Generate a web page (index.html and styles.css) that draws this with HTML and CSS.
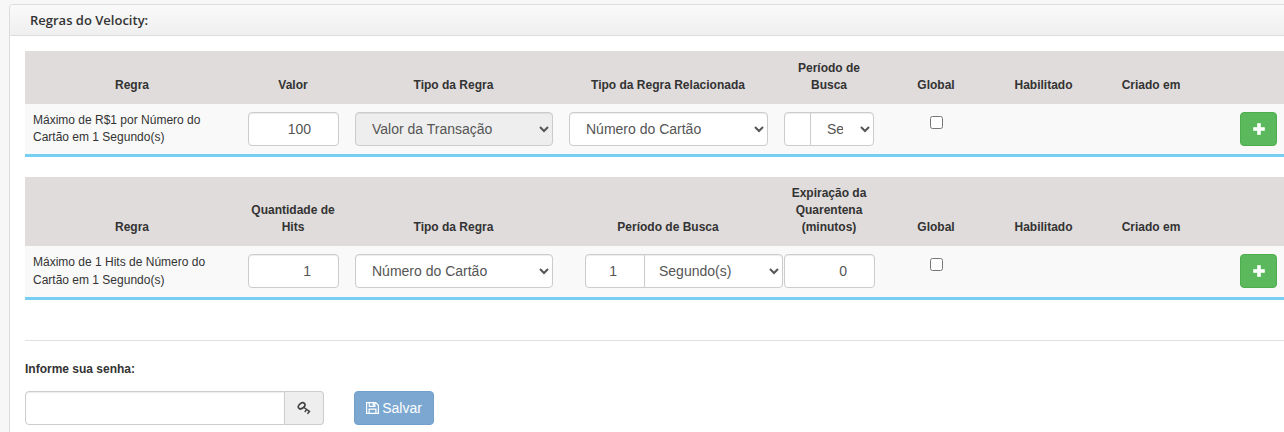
FILE: index.html
```html
<!DOCTYPE html>
<html lang="pt-BR">
<head>
<meta charset="utf-8">
<title>Regras do Velocity</title>
<link rel="stylesheet" href="styles.css">
</head>
<body>
<section class="panel">
  <header class="panel-heading">Regras do Velocity:</header>
  <div class="panel-body">
    <table class="rules rules-value">
      <colgroup><col class="c-rule"><col class="c1"><col class="c-type"><col class="c-rule"><col class="c1"><col class="c1"><col class="c-enabled"><col class="c1"><col class="c1"></colgroup>
      <thead><tr><th>Regra</th><th>Valor</th><th>Tipo da Regra</th><th>Tipo da Regra Relacionada</th><th>Período de Busca</th><th>Global</th><th>Habilitado</th><th>Criado em</th><th></th></tr></thead>
      <tbody><tr>
        <td>Máximo de R$1 por Número do Cartão em 1 Segundo(s)</td>
        <td><input class="control number" type="text" value="100"></td>
        <td><select class="control" disabled><option>Valor da Transação</option></select></td>
        <td><select class="control"><option>Número do Cartão</option></select></td>
        <td><div class="group group-small"><input class="control" type="text"><select class="control"><option>Segundo(s)</option></select></div></td>
        <td class="center"><input class="check" type="checkbox"></td>
        <td></td><td></td>
        <td class="center"><button class="btn btn-add" aria-label="Adicionar"><svg width="12" height="12" viewBox="0 0 12 12"><path d="M4.500.5h3v4h4v3h-4v4h-3v-4h-4v-3h4z" fill="#fff" stroke="#fff" stroke-linejoin="round" stroke-width=".6"/></svg></button></td>
      </tr></tbody>
    </table>
    <table class="rules rules-hits">
      <colgroup><col class="c-rule"><col class="c1"><col class="c-type"><col class="c-rule"><col class="c1"><col class="c1"><col class="c-enabled"><col class="c1"><col class="c1"></colgroup>
      <thead><tr><th>Regra</th><th>Quantidade de Hits</th><th>Tipo da Regra</th><th>Período de Busca</th><th>Expiração da Quarentena (minutos)</th><th>Global</th><th>Habilitado</th><th>Criado em</th><th></th></tr></thead>
      <tbody><tr>
        <td>Máximo de 1 Hits de Número do Cartão em 1 Segundo(s)</td>
        <td><input class="control number" type="text" value="1"></td>
        <td><select class="control"><option>Número do Cartão</option></select></td>
        <td><div class="group group-wide"><input class="control number" type="text" value="1"><select class="control"><option>Segundo(s)</option></select></div></td>
        <td><input class="control number" type="text" value="0"></td>
        <td class="center"><input class="check" type="checkbox"></td>
        <td></td><td></td>
        <td class="center"><button class="btn btn-add" aria-label="Adicionar"><svg width="12" height="12" viewBox="0 0 12 12"><path d="M4.500.5h3v4h4v3h-4v4h-3v-4h-4v-3h4z" fill="#fff" stroke="#fff" stroke-linejoin="round" stroke-width=".6"/></svg></button></td>
      </tr></tbody>
    </table>
    <hr class="divider">
    <label class="label" for="senha">Informe sua senha:</label>
    <div class="actions">
      <div class="group password">
        <input class="control" id="senha" type="password">
        <span class="addon"><svg width="14" height="14" viewBox="0 0 14 14" fill="none" stroke="#444"><ellipse cx="4.600" cy="4.800" rx="3.700" ry="2.500" transform="rotate(-38 4.600 4.800)" stroke-width="1.700"/><path d="M6.300 6l6.800 4.800M9.700 8.400l-1.900 2.600M12.400 10.300l-1.900 2.600" stroke-width="1.500"/></svg></span>
      </div>
      <button class="btn btn-save"><svg width="13" height="12" viewBox="0 0 13 12" fill="none" stroke="#fff"><path d="M.6.6h9l2.800 2.600v8.200H.6zM3.300.6v3.800h5.600V.6M3.100 11.400V7.200h6.800v4.200" stroke-width="1.200"/><path d="M7.400 1v2.700" stroke-width="1.500"/></svg><span>Salvar</span></button>
    </div>
  </div>
</section>
</body>
</html>
```
FILE: styles.css
```css
* { box-sizing: border-box; }
body {
  margin: 0;
  padding: 4px 0 0 9px;
  height: 432px;
  overflow: hidden;
  background: #f7f7f7;
  color: #333;
  font: 12px/17.143px "Liberation Sans", Arial, sans-serif;
}
.panel {
  width: 1319px;
  height: 428px;
  background: #fff;
  border: 1px solid #ddd;
  border-bottom: 0;
  border-radius: 4px 4px 0 0;
}
.panel-heading {
  height: 31px;
  padding: 0 20px;
  border-bottom: 1px solid #ddd;
  border-radius: 3px 3px 0 0;
  background: linear-gradient(#fafafa, #efefef);
  font: 600 13px/30px "Open Sans", sans-serif;
}
.panel-body { padding: 15px 15px 0; }
.rules {
  width: 1287px;
  table-layout: fixed;
  border-spacing: 0;
  margin-bottom: 20px;
}
.c1 { width: 107px; }
.c-enabled { width: 108px; }
.c-type { width: 214px; }
.c-rule { width: 215px; }
.rules th {
  padding: 8px 8px 8px 7px;
  background: #e0dcdb;
  border-bottom: 2px solid #e0dcdb;
  vertical-align: bottom;
  text-align: center;
}
.rules td {
  padding: 8px 8px 0;
  background: #f9f9f9;
  border-bottom: 3px solid #76cff3;
  vertical-align: top;
}
.rules td.center { text-align: center; }
.rules-value th, .rules-value td { height: 53px; }
.rules-hits th { height: 69px; }
.rules-hits td { height: 54px; }
.control {
  display: block;
  width: 100%;
  height: 34px;
  padding: 6px 12px;
  border: 1px solid #ccc;
  border-radius: 4px;
  background-color: #fff;
  box-shadow: inset 0 1px 1px rgba(0, 0, 0, .075);
  color: #555;
  font: 14px/20px "Liberation Sans", Arial, sans-serif;
}
.control:disabled { background-color: #eee; opacity: 1; }
.number { padding-right: 27px; text-align: right; }
.group { display: flex; }
.group .control:first-child { flex: none; border-radius: 4px 0 0 4px; }
.group select { flex: 1; min-width: 0; margin-left: -1px; border-radius: 0 4px 4px 0; }
.group-small { width: 90px; }
.group-small .control:first-child { width: 27px; }
.group-small select { padding-right: 14px; }
.group-wide { width: 198px; margin-left: 16px; }
.group-wide .control:first-child { width: 60px; }
.group-wide select { padding-left: 10px; }
.check { width: 13px; height: 13px; margin: 4px 0 0; vertical-align: top; }
.btn {
  display: inline-flex;
  align-items: center;
  justify-content: center;
  height: 34px;
  padding: 0;
  border-radius: 4px;
  border: 1px solid #4cae4c;
  font: 14px/20px "Liberation Sans", Arial, sans-serif;
  color: #fff;
}
.btn-add { width: 37px; background: #5cb85c; }
.btn-save { width: 80px; gap: 3px; background: #7ba7d1; border-color: #729fc9; }
.divider { height: 1px; margin: 40px 0 20px; border: 0; background: #e1e1e1; }
.label { display: block; margin-bottom: 12px; font-weight: bold; }
.actions { display: flex; gap: 30px; }
.password { width: 299px; }
.password .control { width: 260px; }
.addon {
  flex: 1;
  display: flex;
  align-items: center;
  justify-content: center;
  background: #eee;
  border: 1px solid #ccc;
  border-left: 0;
  border-radius: 0 4px 4px 0;
}
```
